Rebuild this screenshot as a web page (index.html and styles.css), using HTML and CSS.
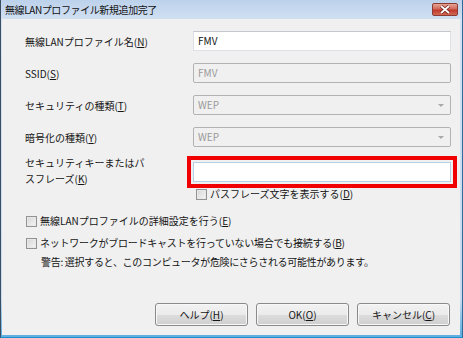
FILE: index.html
```html
<!DOCTYPE html>
<html lang="ja">
<head>
    <meta charset="UTF-8">
    <title>無線LANプロファイル新規追加完了</title>
    <link rel="stylesheet" href="styles.css">
</head>
<body>
    <div class="window">
        <div class="titlebar">
            <span class="title">無線LANプロファイル新規追加完了</span>
            <div class="close">
                <svg width="14" height="9" viewBox="0 0 14 9">
                    <path d="M3 1 L11 8 M11 1 L3 8" stroke="#6b1d17" stroke-width="3.2" fill="none"/>
                    <path d="M3 1 L11 8 M11 1 L3 8" stroke="#ffffff" stroke-width="1.8" fill="none"/>
                </svg>
            </div>
        </div>

        <div class="client">
            <div class="row">
                <div class="label">無線LANプロファイル名(<u>N</u>)</div>
                <div class="textbox">FMV</div>
            </div>
            <div class="row">
                <div class="label">SSID(<u>S</u>)</div>
                <div class="textbox disabled">FMV</div>
            </div>
            <div class="row">
                <div class="label">セキュリティの種類(<u>T</u>)</div>
                <div class="textbox disabled combo">WEP<span class="arrow"></span></div>
            </div>
            <div class="row">
                <div class="label">暗号化の種類(<u>Y</u>)</div>
                <div class="textbox disabled combo">WEP<span class="arrow"></span></div>
            </div>
            <div class="row key-row">
                <div class="label">セキュリティキーまたはパ<br>スフレーズ(<u>K</u>)</div>
                <div class="textbox focus marked"></div>
            </div>
            <div class="check show-key">
                <span class="box"></span>パスフレーズ文字を表示する(<u>D</u>)
            </div>
            <div class="check detail">
                <span class="box"></span>無線LANプロファイルの詳細設定を行う(<u>E</u>)
            </div>
            <div class="check broadcast">
                <span class="box"></span>ネットワークがブロードキャストを行っていない場合でも接続する(<u>B</u>)
            </div>
            <div class="warning">警告: 選択すると、このコンピュータが危険にさらされる可能性があります。</div>

            <div class="buttons">
                <div class="btn">ヘルプ(<u>H</u>)</div>
                <div class="btn">OK(<u>O</u>)</div>
                <div class="btn">キャンセル(<u>C</u>)</div>
            </div>
        </div>
    </div>
</body>
</html>
```

FILE: styles.css
```css
* {
    box-sizing: border-box;
}
body {
    margin: 0;
    font-family: "Noto Sans CJK JP", "Noto Sans", sans-serif;
    font-size: 10px;
    color: #151515;
    background: #f0f0f0;
}
u {
    text-decoration-thickness: 1px;
    text-underline-offset: 1px;
}
.window {
    width: 463px;
    height: 338px;
    display: flex;
    flex-direction: column;
    background: linear-gradient(#bcd1eb, #d2e1f3 20px, #c7daef 300px, #5fb0e0 334px);
    border-left: 1px solid #3c4e62;
    border-right: 1px solid #2f6d9c;
    border-bottom: 1px solid #1b8fd0;
    padding: 0 2px 2px 1px;
}
.titlebar {
    height: 19px;
    display: flex;
    align-items: center;
    justify-content: space-between;
    padding-left: 3px;
}
.title {
    font-size: 10px;
    letter-spacing: -0.4px;
    color: #111;
}
.close {
    width: 26px;
    height: 13px;
    margin-right: 2px;
    border: 1px solid #8c3b33;
    border-radius: 2px;
    background: linear-gradient(#e7a494, #d0675a 45%, #c0392b 55%, #cf6a52);
    display: flex;
    align-items: center;
    justify-content: center;
}
.client {
    flex: 1;
    display: flex;
    flex-direction: column;
    background: #f0f0f0;
    padding: 12px 9px 9px 23px;
}
.row {
    display: flex;
    align-items: center;
    height: 20px;
    margin-bottom: 12px;
}
.label {
    width: 168px;
    flex: none;
}
.textbox {
    width: 258px;
    height: 20px;
    padding: 0 4px;
    line-height: 18px;
    background: #fff;
    border: 1px solid #dcdfe3;
    border-top-color: #c4c7cc;
    color: #111;
}
.textbox.disabled {
    background: #f0f0f0;
    border: 1px solid #b2b2b2;
    border-radius: 2px;
    color: #9a9a9a;
}
.combo {
    display: flex;
    align-items: center;
    justify-content: space-between;
    padding-right: 6px;
}
.arrow {
    width: 0;
    height: 0;
    border-left: 3px solid transparent;
    border-right: 3px solid transparent;
    border-top: 3px solid #a8a8a8;
}
.key-row {
    height: 32px;
    margin-top: -4px;
    margin-bottom: 0;
    align-items: flex-start;
}
.key-row .label {
    line-height: 16px;
}
.textbox.focus {
    margin-top: 7px;
    border: 1px solid #b5cfe5;
}
.marked {
    outline: 4px solid #f00000;
    outline-offset: 2px;
}
.check {
    display: flex;
    align-items: center;
    height: 14px;
    line-height: 14px;
}
.box {
    width: 11px;
    height: 11px;
    margin-right: 3px;
    border: 1px solid #939393;
    background: linear-gradient(135deg, #d6d6d6, #f6f6f6);
    box-shadow: inset 0 0 0 1px #e8e8e8;
    flex: none;
}
.show-key {
    margin-left: 171px;
}
.detail {
    margin-top: 13px;
    margin-left: 1px;
}
.broadcast {
    margin-top: 8px;
    margin-left: 1px;
    letter-spacing: -0.25px;
}
.warning {
    margin-top: 5px;
    margin-left: 16px;
    line-height: 14px;
    letter-spacing: -0.3px;
}
.buttons {
    margin-top: auto;
    margin-right: 1px;
    display: flex;
    justify-content: flex-end;
    gap: 8px;
}
.btn {
    width: 93px;
    height: 23px;
    line-height: 21px;
    text-align: center;
    border: 1px solid #8a8a8a;
    border-radius: 3px;
    background: linear-gradient(#f2f2f2, #ebebeb 50%, #dddddd 51%, #cfcfcf);
    box-shadow: inset 0 0 0 1px #f8f8f8;
}
```
